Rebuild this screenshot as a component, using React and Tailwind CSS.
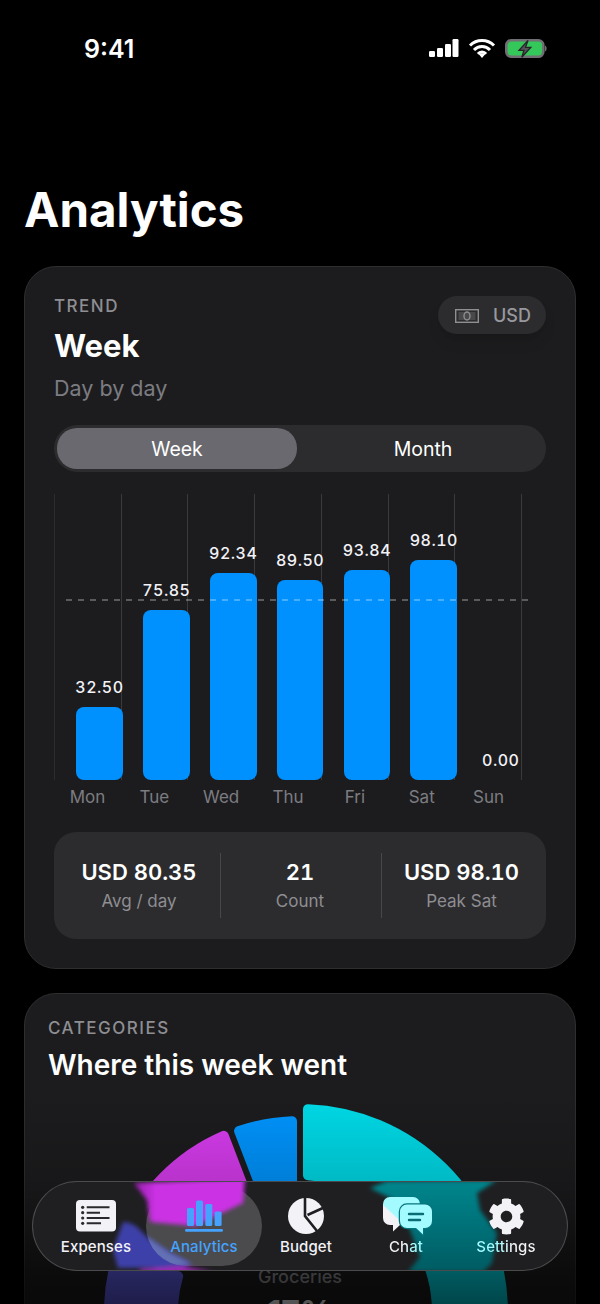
import { FaCog } from 'react-icons/fa';

const DAYS = [
  { day: 'Mon', value: '32.50', height: 73 },
  { day: 'Tue', value: '75.85', height: 170 },
  { day: 'Wed', value: '92.34', height: 207 },
  { day: 'Thu', value: '89.50', height: 200 },
  { day: 'Fri', value: '93.84', height: 210 },
  { day: 'Sat', value: '98.10', height: 220 },
  { day: 'Sun', value: '0.00', height: 0 },
];

// donut sits at (300, 1312) in page coordinates, the svg viewBox uses the same numbers
const point = (radius, deg) => {
  const a = (deg * Math.PI) / 180;
  return `${(300 + radius * Math.sin(a)).toFixed(2)} ${(1312 - radius * Math.cos(a)).toFixed(2)}`;
};

const wedge = (outer, inner, from, to) => {
  const corner = 5;
  const offset = 8;
  const Rm = outer - corner;
  const rm = inner + corner;
  const shiftO = (Math.asin(offset / Rm) * 180) / Math.PI;
  const shiftI = (Math.asin(offset / rm) * 180) / Math.PI;
  const large = to - from > 180 ? 1 : 0;
  return `M${point(Rm, from + shiftO)} A${Rm} ${Rm} 0 ${large} 1 ${point(Rm, to - shiftO)} L${point(rm, to - shiftI)} A${rm} ${rm} 0 ${large} 0 ${point(rm, from + shiftI)} Z`;
};

const SEGMENTS = [
  { color: '#00dbe8', d: wedge(208, 132, 0, 175) },
  { color: '#0095ff', d: wedge(196, 124, -21, 0) },
  { color: '#d93cf0', d: wedge(197, 124, -70, -21) },
  { color: '#5e5ce6', d: wedge(196, 122, -175, -70) },
];

const StatusBar = () => (
  <div className="flex h-[28px] items-center justify-between pl-[84px] pr-[53px]">
    <span className="mt-[1px] text-[25px] font-semibold leading-[28px] text-white">9:41</span>
    <svg width="118" height="20" viewBox="0 0 118 20" className="mt-[2px]">
      <g fill="#fff">
        <rect x="0" y="12" width="6" height="6" rx="1.2" />
        <rect x="8" y="9" width="6" height="9" rx="1.2" />
        <rect x="16" y="5" width="6" height="13" rx="1.2" />
        <rect x="23.5" y="0" width="6" height="18" rx="1.2" />
      </g>
      <path d="M41 6.5a17 17 0 0 1 24 0M45 11a11 11 0 0 1 16 0M49 15a5 5 0 0 1 8 0" fill="none" stroke="#fff" strokeWidth="3" />
      <path d="M53 19l-3-3.4a4 4 0 0 1 6 0z" fill="#fff" />
      <rect x="77.3" y="1.3" width="37" height="16.4" rx="5" fill="#34c759" stroke="#707074" strokeWidth="2.6" />
      <path d="M116 6.5c1 .4 1.6 1.5 1.6 3s-.6 2.6-1.6 3z" fill="#707074" />
      <path d="M99 1.5l-9 9.8h5l-2.2 7 9-10h-5.3z" fill="#55555a" stroke="#26262a" strokeWidth="1.3" />
    </svg>
  </div>
);

const MoneyIcon = () => (
  <svg width="24" height="14" viewBox="0 0 24 14" fill="none" stroke="#8e8e93" strokeWidth="1.4" className="mt-[2px]">
    <rect x="0.7" y="0.7" width="22.6" height="12.6" />
    <rect x="3.5" y="3" width="17" height="8" fill="#48484a" stroke="none" />
    <ellipse cx="12" cy="7" rx="3" ry="4" />
  </svg>
);

const TrendCard = () => (
  <div className="mx-[24px] h-[703px] rounded-[32px] border border-[#2e2e30] bg-[#1c1c1e] px-[29px] pt-[29px]">
    <div className="flex justify-between">
      <div>
        <p className="text-[17px] font-medium leading-[20px] tracking-[1.5px] text-[#8e8e93]">TREND</p>
        <h2 className="mt-[10px] text-[31px] font-bold leading-[40px] text-white">Week</h2>
        <p className="mt-[8px] text-[21.5px] leading-[28px] text-[#7c7c82]">Day by day</p>
      </div>
      <div className="flex h-[38px] w-[108px] items-center gap-[14px] rounded-full bg-[#2c2c2e] pl-[17px] shadow-lg">
        <MoneyIcon />
        <span className="mt-[1px] text-[18px] font-medium text-[#98989e]">USD</span>
      </div>
    </div>

    <div className="mt-[23px] flex h-[47px] rounded-full bg-[#2c2c2e] p-[3px]">
      <div className="flex h-[41px] w-[240px] items-center justify-center rounded-[20px] bg-[#69696f] pt-[3px] text-[19.5px] text-white">Week</div>
      <div className="flex h-[41px] flex-1 items-center justify-center pl-[6px] pt-[3px] text-[19.5px] text-white">Month</div>
    </div>

    <div className="relative mt-[22px] h-[286px]">
      <div className="absolute inset-y-0 left-0 grid w-[468px] grid-cols-7 border-r border-[#3a3a3c]">
        {DAYS.map((d, i) => (
          <div key={d.day} className={i === 0 ? 'border-l border-[#2c2c2e]' : 'border-l border-[#3a3a3c]'} />
        ))}
      </div>
      <div className="relative flex h-full items-end gap-[20.1px] pl-[22px]">
        {DAYS.map((d) => (
          <div key={d.day} className="flex w-[46.8px] flex-col items-center">
            <span className="mb-[10px] whitespace-nowrap text-[16px] font-medium tabular-nums leading-[20px] tracking-[0.5px] text-[#f2f2f7]">{d.value}</span>
            <div className="w-full rounded-[8px] bg-[#0091ff]" style={{ height: d.height }} />
          </div>
        ))}
      </div>
      <svg className="absolute left-[12px] top-[105px]" width="468" height="2">
        <line x1="0" y1="1" x2="468" y2="1" stroke="#fff" strokeOpacity="0.28" strokeWidth="2" strokeDasharray="6 6" />
      </svg>
    </div>

    <div className="mt-[7px] grid w-[468px] grid-cols-7 text-center text-[17px] leading-[20px] text-[#7c7c82]">
      {DAYS.map((d) => (
        <span key={d.day}>{d.day}</span>
      ))}
    </div>

    <div className="mt-[25px] flex h-[107px] items-center rounded-[22px] bg-[#2c2c2e]">
      <div className="w-[166px] pl-[4px] text-center">
        <p className="text-[22px] font-semibold tabular-nums leading-[28px] text-white">USD 80.35</p>
        <p className="mt-[3px] text-[17px] leading-[24px] text-[#8e8e93]">Avg / day</p>
      </div>
      <div className="h-[65px] w-px bg-[#48484a]" />
      <div className="w-[160px] pr-[2px] text-center">
        <p className="text-[22px] font-semibold tabular-nums leading-[28px] text-white">21</p>
        <p className="mt-[3px] text-[17px] leading-[24px] text-[#8e8e93]">Count</p>
      </div>
      <div className="h-[65px] w-px bg-[#48484a]" />
      <div className="flex-1 pr-[5px] text-center">
        <p className="text-[22px] font-semibold tabular-nums leading-[28px] text-white">USD 98.10</p>
        <p className="mt-[3px] text-[17px] leading-[24px] text-[#8e8e93]">Peak Sat</p>
      </div>
    </div>
  </div>
);

const CategoriesCard = () => (
  <div className="relative mx-[24px] mt-[24px] h-[500px] overflow-hidden rounded-[32px] border border-[#2e2e30] bg-[#1c1c1e] pl-[23px] pt-[24px]">
    <p className="text-[17px] font-medium leading-[20px] tracking-[1.5px] text-[#8e8e93]">CATEGORIES</p>
    <h2 className="mt-[9px] text-[28px] font-semibold leading-[36px] text-white">Where this week went</h2>
    <svg className="-ml-[23px] mt-[7px] block" width="550" height="260" viewBox="25 1090 550 260">
      {SEGMENTS.map((s) => (
        <path key={s.color} d={s.d} fill={s.color} stroke={s.color} strokeWidth="10" strokeLinejoin="round" />
      ))}
    </svg>
    <div className="absolute inset-x-0 top-[272px] text-center">
      <p className="text-[18px] font-medium leading-[22px] text-[#8e8e93]">Groceries</p>
      <p className="mt-[5px] text-[32px] font-bold leading-[40px] text-white">17%</p>
    </div>
  </div>
);

const ExpensesIcon = () => (
  <svg width="40" height="32" viewBox="0 0 40 32">
    <rect width="40" height="31.5" rx="4" fill="#f2f2f7" />
    <g fill="#2a2a2c">
      <circle cx="6.7" cy="7.3" r="1.6" />
      <circle cx="6.7" cy="12.7" r="1.6" />
      <circle cx="6.7" cy="18" r="1.6" />
      <circle cx="6.7" cy="23.3" r="1.6" />
    </g>
    <path d="M10.7 7.3H33.5M10.7 12.7H24M10.7 18H33.5M10.7 23.3H25" stroke="#2a2a2c" strokeWidth="2" />
  </svg>
);

const AnalyticsIcon = () => (
  <svg width="38" height="32" viewBox="0 0 38 32" fill="#45a2ff">
    <rect x="2" y="8" width="7" height="18" rx="1.5" />
    <rect x="11" y="0.5" width="7" height="25.5" rx="1.5" />
    <rect x="20.3" y="4" width="7" height="22" rx="1.5" />
    <rect x="29.6" y="11.5" width="7" height="14.5" rx="1.5" />
    <rect x="0" y="29" width="38" height="2.8" rx="1.4" />
  </svg>
);

const BudgetIcon = () => (
  <svg width="36" height="36" viewBox="0 0 36 36">
    <circle cx="18" cy="18" r="18" fill="#f2f2f7" />
    <path d="M17 0V18L29 33M19.5 17L36 9.5" fill="none" stroke="#1f1f21" strokeWidth="2.6" />
  </svg>
);

const ChatIcon = () => (
  <svg width="50" height="40" viewBox="0 0 50 40" className="ml-[3px]">
    <defs>
      <linearGradient id="chatBack" x1="0" y1="30" x2="22" y2="6" gradientUnits="userSpaceOnUse">
        <stop offset="0.45" stopColor="#f2f2f7" />
        <stop offset="0.5" stopColor="#a4fbff" />
      </linearGradient>
    </defs>
    <path d="M7 1H30a7 7 0 0 1 7 7V22a7 7 0 0 1-7 7H17L10 35.5V29H7a7 7 0 0 1-7-7V8a7 7 0 0 1 7-7z" fill="url(#chatBack)" />
    <path d="M24 8.5H42a7 7 0 0 1 7 7V25a7 7 0 0 1-7 7H40V38.5L33 32H24a7 7 0 0 1-7-7V15.5a7 7 0 0 1 7-7z" fill="#a4fbff" stroke="#04757c" strokeWidth="2.5" paintOrder="stroke" />
    <path d="M26 18H40M26 24H37" stroke="#0b6d74" strokeWidth="2.4" strokeLinecap="round" />
  </svg>
);

const TabItem = ({ width, label, labelClass, children }) => (
  <div className={`flex h-[80px] flex-col items-center pt-[11px] ${width}`}>
    <div className="flex h-[38px] items-center justify-center">{children}</div>
    <span className={`mt-[2px] text-[15px] font-medium leading-[20px] tracking-[0.1px] ${labelClass}`}>{label}</span>
  </div>
);

const TabBar = () => (
  <div className="absolute bottom-[33px] left-[32px] flex h-[90px] w-[536px] items-center overflow-hidden rounded-[45px] border border-white/20 bg-[#1f1f21] pl-[13px]">
    {/* selected pill goes under the bent colours so they keep their saturation */}
    <div className="absolute left-[113px] top-[4px] h-[80px] w-[116px] rounded-[40px] bg-white/20" />
    {/* what the glass bends from the donut underneath */}
    <svg className="absolute -left-px -top-px" width="536" height="90" viewBox="32 1181 536 90">
      <defs>
        <filter id="glass" x="-20%" y="-20%" width="140%" height="140%">
          <feGaussianBlur stdDeviation="2.2" />
        </filter>
        <linearGradient id="magentaGlass" x1="136" y1="0" x2="156" y2="0" gradientUnits="userSpaceOnUse">
          <stop offset="0" stopColor="#9a20b0" />
          <stop offset="1" stopColor="#cb31e4" />
        </linearGradient>
        <linearGradient id="tealGlass" x1="0" y1="1181" x2="0" y2="1271" gradientUnits="userSpaceOnUse">
          <stop offset="0" stopColor="#00868d" />
          <stop offset="1" stopColor="#005c63" />
        </linearGradient>
        <clipPath id="pillClip">
          <rect x="146" y="1186" width="116" height="80" rx="40" />
        </clipPath>
      </defs>
      <g filter="url(#glass)">
        <path d="M134 1183L245 1178L243 1203L195 1226L150 1222L147 1200z" fill="url(#magentaGlass)" />
        <path d="M123 1222Q130 1222 137 1227L150 1240L170 1253L192 1264L178 1268H118L113 1250Z" fill="#3d3fa8" />
        <path d="M140 1270L180 1266L214 1272L140 1275z" fill="#a126b8" />
        <path d="M370 1188L387 1181L497 1180L477 1193L480 1210L497 1233L492 1263L483 1272H408L420 1257L410 1230L400 1203Z" fill="url(#tealGlass)" />
      </g>
      <path d="M146 1236L170 1253L192 1264L170 1268L146 1262Z" fill="#6470b4" clipPath="url(#pillClip)" filter="url(#glass)" />
    </svg>
    <div className="relative flex items-center">
      <TabItem width="w-[100px]" label="Expenses" labelClass="text-[#f2f2f7]">
        <ExpensesIcon />
      </TabItem>
      <TabItem width="w-[116px]" label="Analytics" labelClass="text-[#45a2ff]">
        <AnalyticsIcon />
      </TabItem>
      <TabItem width="w-[88px]" label="Budget" labelClass="text-[#f2f2f7]">
        <BudgetIcon />
      </TabItem>
      <TabItem width="w-[112px]" label="Chat" labelClass="bg-linear-to-r from-[#f2f2f7] from-50% to-[#a4fbff] to-60% bg-clip-text text-transparent">
        <ChatIcon />
      </TabItem>
      <TabItem width="w-[88px]" label="Settings" labelClass="bg-linear-to-r from-[#a4fbff] from-40% to-[#f2f2f7] to-60% bg-clip-text text-transparent">
        <FaCog size={37} color="#f2f2f7" />
      </TabItem>
    </div>
  </div>
);

const App = () => (
  <div className="relative h-[1304px] w-[600px] overflow-hidden bg-black font-['Inter','Noto_Sans',sans-serif]">
    <div className="pt-[34px]">
      <StatusBar />
    </div>
    <h1 className="mt-[118px] pl-[24px] text-[47.5px] font-bold leading-[60px] text-white">Analytics</h1>
    <div className="mt-[26px]">
      <TrendCard />
      <CategoriesCard />
    </div>
    {/* bottom fade behind the tab bar */}
    <div className="absolute inset-x-0 bottom-0 h-[214px] bg-[linear-gradient(to_bottom,transparent_0%,rgba(0,0,0,0.15)_42%,rgba(0,0,0,0.6)_87%,rgba(0,0,0,0.68)_100%)]" />
    <TabBar />
  </div>
);

export default App;
